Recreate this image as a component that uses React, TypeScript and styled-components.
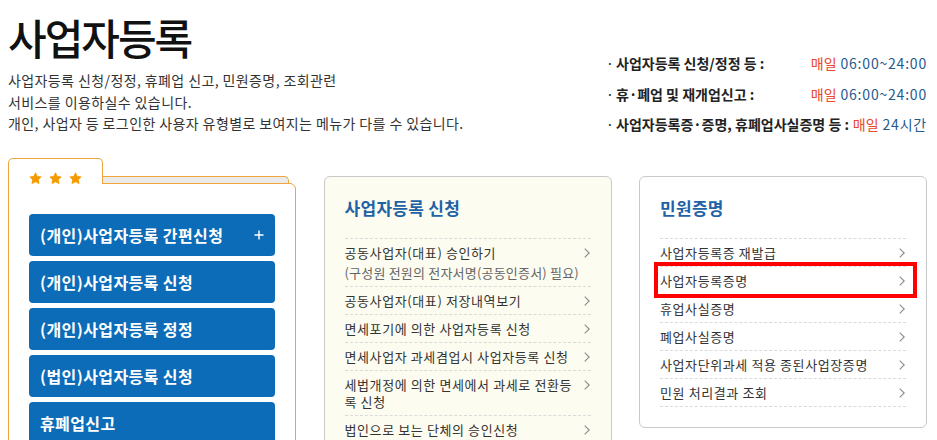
import React from 'react';
import styled, { createGlobalStyle } from 'styled-components';

const GlobalStyle = createGlobalStyle`
  html, body { margin: 0; padding: 0; background: #fff; }
  body {
    font-family: "Noto Sans CJK KR", "Noto Sans", sans-serif;
    color: #222;
    overflow: hidden;
  }
  * { box-sizing: border-box; }
`;

const Page = styled.div`
  width: 937px;
  height: 440px;
  padding: 0 10px 0 8px;
  overflow: hidden;
`;

const Header = styled.header`
  display: flex;
  justify-content: space-between;
  align-items: flex-start;
`;

const Intro = styled.div`
  display: flex;
  flex-direction: column;
`;

const Title = styled.h1`
  margin: 12px 0 0;
  font-size: 42px;
  line-height: 50px;
  font-weight: 500;
  letter-spacing: -2px;
  color: #111;
`;

const Desc = styled.p`
  margin: 8px 0 0;
  font-size: 14px;
  line-height: 21.5px;
  letter-spacing: 0.4px;
  color: #333;
`;

const InfoList = styled.ul`
  list-style: none;
  margin: 48px 0 0;
  padding: 0;
  width: 321px;
`;

const InfoRow = styled.li`
  display: flex;
  justify-content: space-between;
  align-items: center;
  height: 30.5px;
  font-size: 14px;
`;

const InfoLabel = styled.span`
  font-weight: 700;
  letter-spacing: 0;
  color: #222;
  &::before {
    content: '·';
    display: inline-block;
    width: 10px;
    font-weight: 400;
  }
`;

const InfoTime = styled.span`
  color: #1f5a8e;
  letter-spacing: 0.8px;
`;

const Daily = styled.span`
  color: #e8482c;
  letter-spacing: 0;
`;

const Cards = styled.div`
  display: grid;
  grid-template-columns: 288px 288px 288px;
  justify-content: space-between;
  align-items: start;
  margin-top: 18px;
`;

const Folder = styled.section`
  display: flex;
  flex-direction: column;
`;

const FolderTabs = styled.div`
  display: flex;
  align-items: flex-end;
  height: 26px;
  margin-bottom: -1px;
  position: relative;
  z-index: 1;
`;

const FrontTab = styled.div`
  width: 95px;
  height: 26px;
  border: 1px solid #f0a43a;
  border-bottom: none;
  border-radius: 5px 5px 0 0;
  background: #fff;
  display: flex;
  gap: 7px;
  padding: 13px 0 0 20px;
`;

const BackTab = styled.div`
  flex: 1;
  height: 7px;
  margin: 0 7px 1px 0;
  border: 1px solid #f0a43a;
  border-left: none;
  border-bottom: none;
  border-radius: 0 5px 0 0;
  background: #ebebeb;
`;

const FolderBody = styled.div`
  border: 1px solid #f0a43a;
  border-radius: 0 6px 0 0;
  background: #fff;
  padding: 30px 20px 40px;
  display: flex;
  flex-direction: column;
  gap: 5px;
`;

const MenuButton = styled.a`
  display: flex;
  align-items: center;
  justify-content: space-between;
  height: 42px;
  padding: 0 11px;
  border-radius: 4px;
  background: #0c6cb8;
  color: #fff;
  font-size: 16px;
  font-weight: 700;
  letter-spacing: 0.4px;
  text-decoration: none;
`;

const Card = styled.section<{ $bg: string }>`
  margin-top: 18px;
  background: ${(p) => p.$bg};
  border: 1px solid #c9c9c9;
  border-radius: 6px;
  padding: 21px 20px 20px;
`;

const CardTitle = styled.h2`
  margin: 0 0 20px;
  font-size: 17px;
  line-height: 20px;
  font-weight: 700;
  letter-spacing: 0.3px;
  color: #1e63a6;
`;

const LinkList = styled.ul`
  list-style: none;
  margin: 0;
  padding: 0;
  border-top: 1px dashed #dadada;
`;

const LinkRow = styled.li`
  position: relative;
  display: flex;
  justify-content: space-between;
  align-items: flex-start;
  gap: 10px;
  padding: 5px 0;
  border-bottom: 1px dashed #dadada;
  font-size: 13px;
  line-height: 17px;
  letter-spacing: 0.6px;
  color: #333;
`;

const LinkText = styled.div`
  flex: 1;
  min-width: 0;
`;

const SubText = styled.div`
  margin-top: 3px;
  color: #666;
  white-space: nowrap;
  letter-spacing: 0.2px;
`;

const Chevron = styled.svg`
  flex: none;
  margin-top: 4px;
  margin-right: 1px;
`;

const Highlight = styled.span`
  position: absolute;
  top: -5px;
  bottom: -4px;
  left: -6px;
  right: -11px;
  border: 4px solid #f00;
  pointer-events: none;
`;

const Star = () => (
  <svg width="13" height="13" viewBox="0 0 24 24">
    <path
      d="M12 1.5l3.2 6.6 7.2 1-5.2 5.1 1.3 7.2L12 18l-6.5 3.4 1.3-7.2L1.6 9.1l7.2-1z"
      fill="#f59a00"
      stroke="#f59a00"
      strokeWidth="1.5"
      strokeLinejoin="round"
    />
  </svg>
);

const Plus = () => (
  <svg width="10" height="10" viewBox="0 0 10 10">
    <path d="M5 0.5v9M0.5 5h9" stroke="#fff" strokeWidth="1.4" />
  </svg>
);

const Arrow = () => (
  <Chevron width="6" height="10" viewBox="0 0 6 10">
    <polyline points="0.7,0.7 5.2,5 0.7,9.3" fill="none" stroke="#8a8a8a" strokeWidth="1.1" />
  </Chevron>
);

const applyLinks = [
  { text: '공동사업자(대표) 승인하기', sub: '(구성원 전원의 전자서명(공동인증서) 필요)' },
  { text: '공동사업자(대표) 저장내역보기' },
  { text: '면세포기에 의한 사업자등록 신청' },
  { text: '면세사업자 과세겸업시 사업자등록 신청' },
  { text: '세법개정에 의한 면세에서 과세로 전환등록 신청' },
  { text: '법인으로 보는 단체의 승인신청' },
];

const certLinks = [
  { text: '사업자등록증 재발급' },
  { text: '사업자등록증명', active: true },
  { text: '휴업사실증명' },
  { text: '폐업사실증명' },
  { text: '사업자단위과세 적용 종된사업장증명' },
  { text: '민원 처리결과 조회' },
];

const menus = [
  '(개인)사업자등록 간편신청',
  '(개인)사업자등록 신청',
  '(개인)사업자등록 정정',
  '(법인)사업자등록 신청',
  '휴폐업신고',
];

export default function App() {
  return (
    <>
      <GlobalStyle />
      <Page>
        <Header>
          <Intro>
            <Title>사업자등록</Title>
            <Desc>
              사업자등록 신청/정정, 휴폐업 신고, 민원증명, 조회관련
              <br />
              서비스를 이용하실수 있습니다.
              <br />
              개인, 사업자 등 로그인한 사용자 유형별로 보여지는 메뉴가 다를 수 있습니다.
            </Desc>
          </Intro>
          <InfoList>
            <InfoRow>
              <InfoLabel>사업자등록 신청/정정 등 :</InfoLabel>
              <InfoTime>
                <Daily>매일</Daily> 06:00~24:00
              </InfoTime>
            </InfoRow>
            <InfoRow>
              <InfoLabel>휴·폐업 및 재개업신고 :</InfoLabel>
              <InfoTime>
                <Daily>매일</Daily> 06:00~24:00
              </InfoTime>
            </InfoRow>
            <InfoRow>
              <InfoLabel>사업자등록증·증명, 휴폐업사실증명 등 :</InfoLabel>
              <InfoTime>
                <Daily>매일</Daily> 24시간
              </InfoTime>
            </InfoRow>
          </InfoList>
        </Header>

        <Cards>
          <Folder>
            <FolderTabs>
              <FrontTab>
                <Star />
                <Star />
                <Star />
              </FrontTab>
              <BackTab />
            </FolderTabs>
            <FolderBody>
              {menus.map((m, i) => (
                <MenuButton key={m} href="#">
                  <span>{m}</span>
                  {i === 0 && <Plus />}
                </MenuButton>
              ))}
            </FolderBody>
          </Folder>

          <Card $bg="#fdfcf1">
            <CardTitle>사업자등록 신청</CardTitle>
            <LinkList>
              {applyLinks.map((l) => (
                <LinkRow key={l.text}>
                  <LinkText>
                    {l.text}
                    {l.sub && <SubText>{l.sub}</SubText>}
                  </LinkText>
                  <Arrow />
                </LinkRow>
              ))}
            </LinkList>
          </Card>

          <Card $bg="#fff">
            <CardTitle>민원증명</CardTitle>
            <LinkList>
              {certLinks.map((l) => (
                <LinkRow key={l.text}>
                  <LinkText>{l.text}</LinkText>
                  <Arrow />
                  {l.active && <Highlight />}
                </LinkRow>
              ))}
            </LinkList>
          </Card>
        </Cards>
      </Page>
    </>
  );
}
